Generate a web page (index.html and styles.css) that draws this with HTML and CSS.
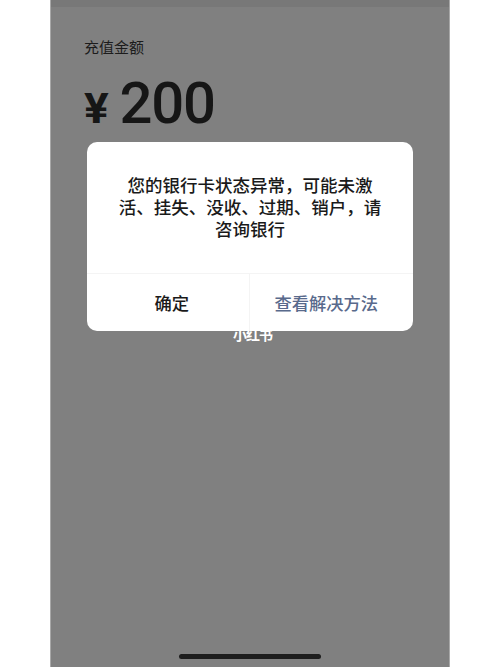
FILE: index.html
```html
<!DOCTYPE html>
<html lang="zh-CN">
<head>
<meta charset="utf-8">
<title>充值金额</title>
<link rel="stylesheet" href="styles.css">
</head>
<body>
<div class="screen">
  <div class="topband"></div>
  <div class="content">
    <div class="label">充值金额</div>
    <div class="amount"><span class="yen">¥</span><span class="num">200</span></div>
  </div>
  <div class="watermark">小红书</div>
  <div class="home"></div>
  <div class="dialog">
    <div class="msg">您的银行卡状态异常，可能未激活、挂失、没收、过期、销户，请咨询银行</div>
    <div class="actions">
      <div class="btn ok">确定</div>
      <div class="btn more">查看解决方法</div>
    </div>
  </div>
</div>
</body>
</html>
```
FILE: styles.css
```css
html, body {
  margin: 0;
  padding: 0;
  background: #ffffff;
}
body {
  font-family: "Noto Sans CJK SC", "Noto Sans", sans-serif;
}
.screen {
  position: relative;
  box-sizing: border-box;
  width: 400px;
  height: 667px;
  margin-left: 50px;
  background: #808080;
  border-left: 1px solid #a8a8a8;
  border-right: 1px solid #a8a8a8;
  display: flex;
  flex-direction: column;
  overflow: hidden;
}
.topband {
  height: 7px;
  background: #787878;
  flex: none;
}
.content {
  padding: 29px 0 0 33px;
  display: flex;
  flex-direction: column;
}
.label {
  font-size: 15px;
  line-height: 22px;
  color: #1c1c1c;
}
.amount {
  display: flex;
  align-items: baseline;
  margin-top: 15px;
  color: #161616;
  font-family: Roboto, "Liberation Sans", sans-serif;
}
.yen {
  font-size: 42px;
  font-weight: 700;
  line-height: 60px;
  margin-right: 11px;
  transform: scaleX(1.1);
  transform-origin: left center;
}
.num {
  font-size: 58px;
  font-weight: 500;
  line-height: 60px;
  letter-spacing: -1.2px;
  margin-left: 2px;
}
.watermark {
  position: absolute;
  left: 182px;
  top: 326px;
  font-size: 14px;
  font-weight: 700;
  line-height: 16px;
  color: #ffffff;
  letter-spacing: -1px;
}
.home {
  margin-top: auto;
  margin-bottom: 8px;
  align-self: center;
  width: 142px;
  height: 5px;
  border-radius: 3px;
  background: #1e1e1e;
  flex: none;
}
.dialog {
  position: absolute;
  left: 36px;
  top: 142px;
  width: 326px;
  height: 189px;
  background: #ffffff;
  border-radius: 10px;
  display: flex;
  flex-direction: column;
  z-index: 2;
}
.msg {
  padding: 32px 28px 0;
  height: 131px;
  box-sizing: border-box;
  font-size: 17.5px;
  font-weight: 500;
  line-height: 22px;
  color: #1a1a1a;
  text-align: center;
}
.actions {
  flex: 1;
  display: flex;
  border-top: 1px solid #f4f4f4;
}
.btn {
  flex: 1;
  display: flex;
  align-items: center;
  justify-content: center;
  font-size: 17.3px;
  font-weight: 500;
}
.ok {
  color: #1a1a1a;
  border-right: 1px solid #f4f4f4;
  padding-left: 8px;
}
.more {
  color: #596a8c;
  padding-right: 10px;
}
```
